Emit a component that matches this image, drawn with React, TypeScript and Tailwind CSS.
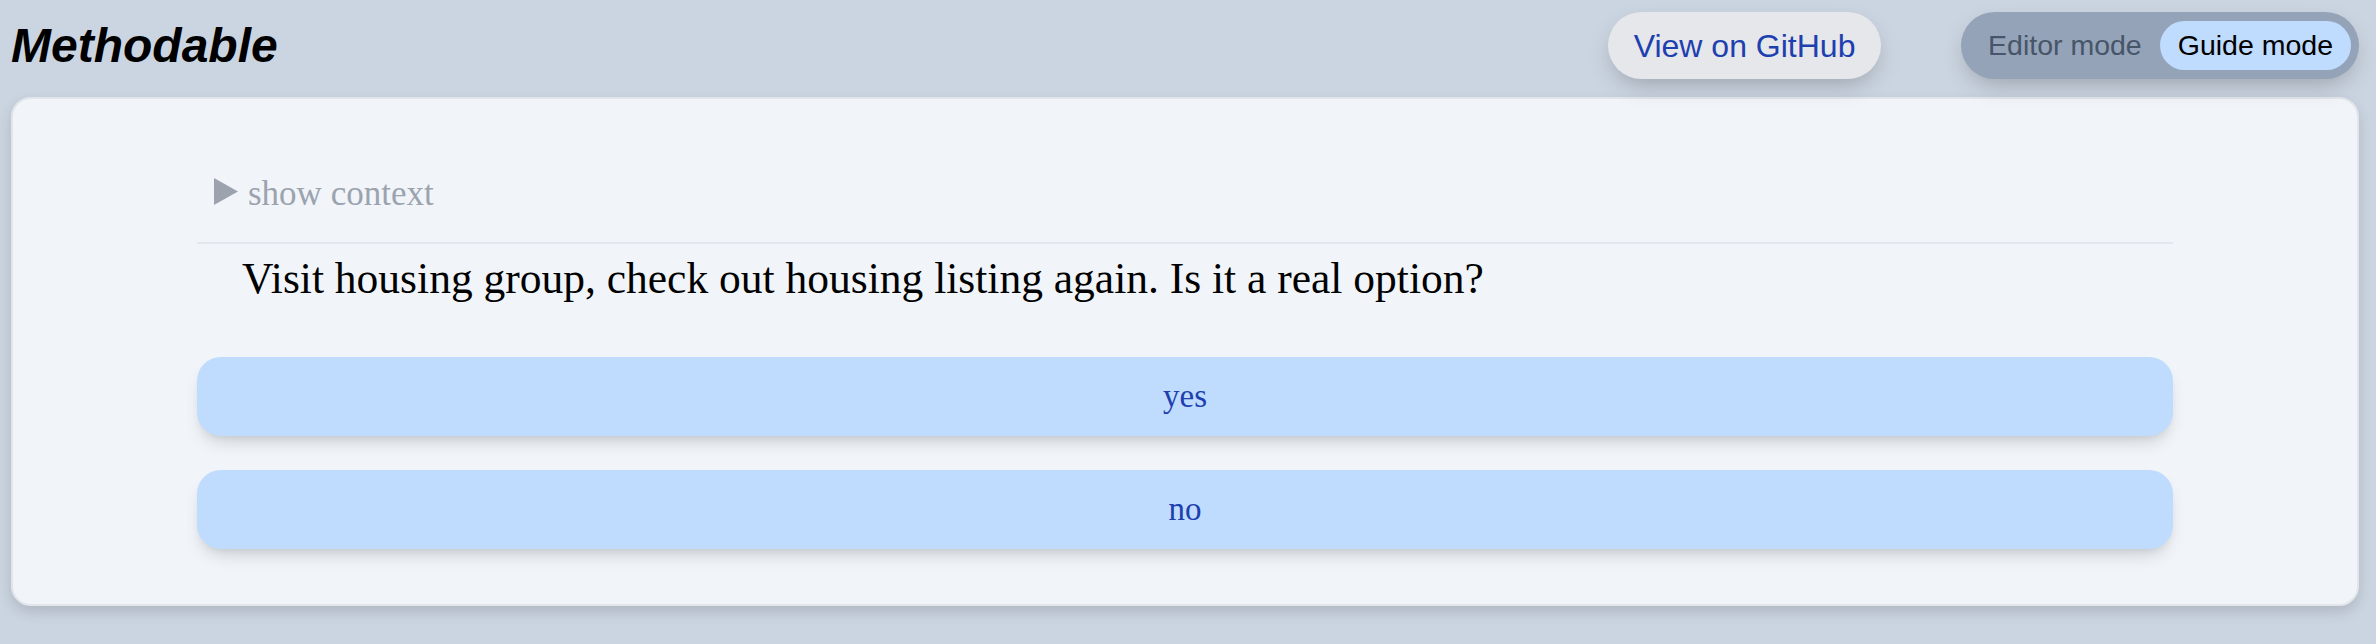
import React from "react";

export default function App() {
  return (
    <div className="min-h-[644px] w-full bg-[#cbd5e1] pl-[11px] pr-[17px] pt-[12px] pb-[20px]">
      <header className="flex h-[67px] items-center">
        <h1
          className="flex-1 text-[48px] font-bold italic leading-none text-black"
          style={{ fontFamily: '"Liberation Sans", Arial, sans-serif' }}
        >
          Methodable
        </h1>
        <button
          className="flex h-[67px] w-[273px] items-center justify-center rounded-full bg-[#e5e7eb] text-[32px] leading-none text-[#1e40af] shadow-[0_10px_24px_-6px_rgba(0,0,0,0.25)]"
          style={{ fontFamily: '"Liberation Sans", Arial, sans-serif' }}
        >
          View on GitHub
        </button>
        <div
          className="ml-[80px] flex h-[67px] items-center rounded-full bg-[#94a3b8] pl-[9px] pr-[8px] shadow-[0_10px_24px_-6px_rgba(0,0,0,0.25)]"
          style={{ fontFamily: '"Liberation Sans", Arial, sans-serif' }}
        >
          <span className="flex h-[49px] items-center rounded-full px-[18px] text-[28.5px] leading-none text-[#475569]">
            Editor mode
          </span>
          <span className="flex h-[49px] items-center rounded-full bg-[#bfdbfe] px-[18px] text-[28.5px] leading-none text-black">
            Guide mode
          </span>
        </div>
      </header>

      <main className="mt-[18px] rounded-[20px] border-2 border-[#e2e6eb] bg-[#f1f5f9] pt-[77px] pb-[55px] shadow-[0_6px_14px_rgba(0,0,0,0.14)]">
        <div
          className="mx-auto w-[1976px]"
          style={{ fontFamily: '"Liberation Serif", "Times New Roman", serif' }}
        >
          <div className="border-b-2 border-[#e2e8f0] pb-[31px]">
            <div className="flex items-start pl-[17px]">
              <svg
                width="24"
                height="27"
                viewBox="0 0 24 27"
                className="mt-[2px] shrink-0"
              >
                <polygon points="0,0 24,13.5 0,27" fill="#9ca3af" />
              </svg>
              <span className="ml-[10px] text-[35px] leading-none text-[#9ca3af]">
                show context
              </span>
            </div>
          </div>
          <p className="mt-[13px] pl-[45px] text-[43.5px] leading-none text-black">
            Visit housing group, check out housing listing again. Is it a real
            option?
          </p>
          <div className="mt-[56px] flex flex-col gap-[34px]">
            <button className="flex h-[79px] w-full items-center justify-center rounded-[24px] bg-[#bfdbfe] text-[33px] leading-none text-[#1e40af] shadow-[0_10px_18px_-6px_rgba(0,0,0,0.18),0_4px_8px_-4px_rgba(0,0,0,0.08)]">
              yes
            </button>
            <button className="flex h-[79px] w-full items-center justify-center rounded-[24px] bg-[#bfdbfe] text-[33px] leading-none text-[#1e40af] shadow-[0_10px_18px_-6px_rgba(0,0,0,0.18),0_4px_8px_-4px_rgba(0,0,0,0.08)]">
              no
            </button>
          </div>
        </div>
      </main>
    </div>
  );
}
